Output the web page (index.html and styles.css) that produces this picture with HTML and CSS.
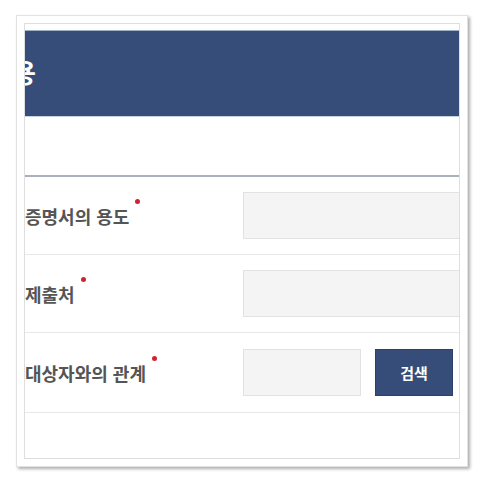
FILE: index.html
```html
<!DOCTYPE html>
<html lang="ko">
<head>
<meta charset="utf-8">
<link rel="stylesheet" href="styles.css">
</head>
<body>
<div class="frame">
  <div class="shot">
    <div class="header"><span class="title">용</span></div>
    <div class="spacer"></div>
    <div class="form">
      <div class="row">
        <div class="label">증명서의 용도<span class="req"></span></div>
        <div class="field"><div class="input wide"></div></div>
      </div>
      <div class="row">
        <div class="label">제출처<span class="req"></span></div>
        <div class="field"><div class="input wide"></div></div>
      </div>
      <div class="row last">
        <div class="label">대상자와의 관계<span class="req"></span></div>
        <div class="field">
          <div class="input short"></div>
          <button class="btn">검색</button>
        </div>
      </div>
    </div>
  </div>
</div>
</body>
</html>
```

FILE: styles.css
```css
* { box-sizing: border-box; }
html, body { margin: 0; padding: 0; background: #ffffff; }
body {
  font-family: "Noto Sans CJK KR", "Noto Sans", sans-serif;
  width: 484px;
  height: 484px;
  overflow: hidden;
}
.frame {
  margin: 15px 0 0 16px;
  width: 452px;
  height: 452px;
  border: 1px solid #e2e2e2;
  padding: 7px;
  background: #fff;
  box-shadow: 2px 2px 3px rgba(0,0,0,0.32);
}
.shot {
  width: 436px;
  height: 436px;
  border: 1px solid #dedede;
  padding-top: 6px;
  overflow: hidden;
  background: #fff;
}
.header {
  height: 87px;
  background: #354d78;
  border-top: 1px solid #9fb0c8;
  border-bottom: 1px solid #c6d3e4;
  display: flex;
  align-items: center;
  color: #fff;
  overflow: hidden;
}
.title {
  font-size: 26px;
  font-weight: 700;
  margin-left: -13px;
  line-height: 30px;
  margin-top: -3px;
}
.spacer {
  height: 60px;
  border-bottom: 2px solid #a9b1bd;
}
.row {
  display: flex;
  align-items: center;
  height: 78px;
  border-bottom: 1px solid #e8e8e8;
}
.row.last { height: 80px; }
.label {
  width: 218px;
  flex: none;
  font-size: 18px;
  line-height: 24px;
  font-weight: 700;
  color: #555;
  white-space: nowrap;
}
.req {
  display: inline-block;
  width: 5px;
  height: 5px;
  border-radius: 50%;
  background: #d3222f;
  vertical-align: top;
  margin-left: 6px;
  margin-top: -5px;
}
.field {
  display: flex;
  align-items: center;
  gap: 14px;
  flex: none;
}
.input {
  height: 47px;
  background: #f4f4f4;
  border: 1px solid #e2e2e2;
}
.input.wide { width: 260px; }
.input.short { width: 118px; }
.btn {
  width: 78px;
  height: 47px;
  background: #354d78;
  border: 1px solid #2c4169;
  color: #fff;
  font-family: "Noto Sans CJK KR", sans-serif;
  font-size: 15px;
  font-weight: 700;
  padding: 0;
}
```
